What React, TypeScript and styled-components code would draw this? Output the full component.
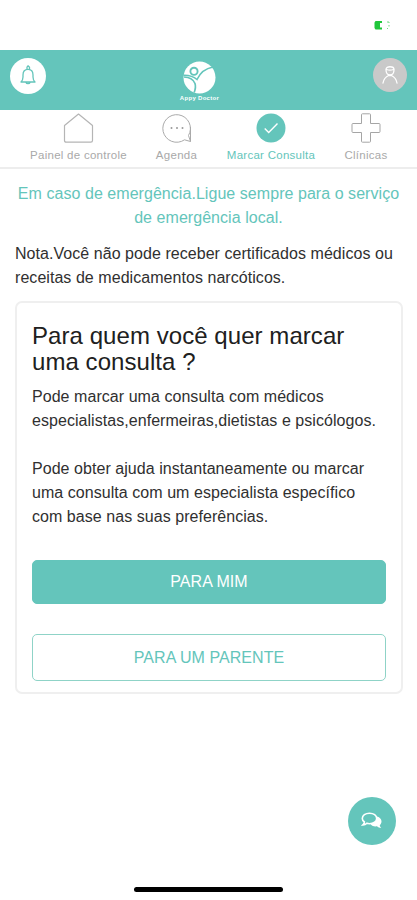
import React from 'react';
import styled, { createGlobalStyle } from 'styled-components';

const teal = '#64c5bb';

const GlobalStyle = createGlobalStyle`
  * { box-sizing: border-box; }
  body {
    margin: 0;
    background: #fff;
    font-family: "Liberation Sans", Arial, sans-serif;
    color: #303030;
  }
`;

const Screen = styled.div`
  width: 417px;
  height: 900px;
  display: flex;
  flex-direction: column;
  position: relative;
  overflow: hidden;
  background: #fff;
`;

const StatusBar = styled.div`
  height: 50px;
  flex: none;
  display: flex;
  justify-content: flex-end;
  padding: 21px 26px 0 0;
`;

const Header = styled.header`
  height: 60px;
  flex: none;
  display: grid;
  grid-template-columns: 36px 1fr 34px;
  align-items: start;
  padding: 8px 10px 0;
  background: ${teal};
`;

const RoundButton = styled.button<{ $size: number; $color: string }>`
  width: ${p => p.$size}px;
  height: ${p => p.$size}px;
  border: 0;
  padding: 0;
  border-radius: 50%;
  background: ${p => p.$color};
  display: flex;
  align-items: center;
  justify-content: center;
`;

const Brand = styled.div`
  display: flex;
  flex-direction: column;
  align-items: center;
  padding: 3px 20px 0 0;
  color: #fff;
  font-size: 6px;
  line-height: 8px;
  font-weight: 700;
  letter-spacing: 0.3px;
  svg { display: block; }
`;

const Nav = styled.nav`
  height: 59px;
  flex: none;
  display: grid;
  grid-template-columns: 127px 69px 120px 70px;
  padding: 3px 0 0 15px;
  border-bottom: 2px solid #ededed;
`;

const NavItem = styled.a<{ $active?: boolean }>`
  display: flex;
  flex-direction: column;
  align-items: center;
  font-size: 11.5px;
  line-height: 14px;
  white-space: nowrap;
  letter-spacing: 0.27px;
  color: ${p => (p.$active ? teal : '#a9a9a9')};
  svg { display: block; margin-bottom: 5px; }
`;

const Content = styled.main`
  padding: 13px 15px 0;
`;

const Line = styled.span`
  display: block;
  white-space: nowrap;
`;

const Paragraph = styled.p<{ $gap?: number }>`
  margin: 0 0 ${p => p.$gap ?? 0}px;
  font-size: 16px;
  line-height: 24px;
  letter-spacing: 0.05px;
`;

const Warning = styled(Paragraph)`
  color: ${teal};
  text-align: center;
`;

const Card = styled.section`
  width: 388px;
  height: 393px;
  margin-top: 11px;
  padding: 20px 15px 0;
  border: 2px solid #efefef;
  border-radius: 7px;
`;

const Title = styled.h1`
  margin: 0 0 10px;
  font-size: 24px;
  line-height: 26px;
  font-weight: 400;
  letter-spacing: 0.06px;
  color: #202020;
`;

const ActionButton = styled.button<{ $filled?: boolean; $height: number }>`
  display: block;
  width: 354px;
  height: ${p => p.$height}px;
  padding: 0;
  font: 16px "Liberation Sans", Arial, sans-serif;
  letter-spacing: 0.05px;
  border-radius: 5px;
  border: 1px solid ${p => (p.$filled ? teal : '#8fd3c7')};
  background: ${p => (p.$filled ? teal : '#fff')};
  color: ${p => (p.$filled ? '#fff' : teal)};
`;

const Actions = styled.div`
  display: flex;
  flex-direction: column;
  gap: 30px;
`;

const ChatButton = styled(RoundButton)`
  position: absolute;
  left: 348px;
  top: 797px;
`;

const HomeIndicator = styled.div`
  position: absolute;
  left: 134px;
  top: 887px;
  width: 149px;
  height: 5px;
  border-radius: 3px;
  background: #000;
`;

const BatteryIcon = () => (
  <svg width="17" height="9" viewBox="0 0 17 9">
    <path d="M1.500 0H8V2H6V6.500H8V8.500H1.500L.5 7V1.500Z" fill="#20c63b" />
    <path d="M13 1h2v1M15 4v1.500M13 7.500h1" stroke="#75dc85" fill="none" />
  </svg>
);

const BellIcon = () => (
  <svg width="18" height="22" viewBox="0 0 18 22" fill="none" stroke={teal} strokeWidth="1.3" strokeLinecap="round" strokeLinejoin="round">
    <path d="M8 4.300V2.200L9 .8L10.500 2.200V4.500" />
    <path d="M4 12V10C4 6.500 5.800 4.300 9 4.300s5 2.200 5 5.700v2c0 2.500.8 3.800 2 5H2c1.200-1.200 2-2.500 2-5ZM7 17.500c.4 1.500 3.600 1.500 4 0" />
  </svg>
);

const LogoIcon = () => (
  <svg width="33" height="33" viewBox="0 0 33 33" fill="none">
    <circle cx="16.500" cy="16.500" r="16" fill="#fff" />
    <circle cx="11" cy="10.300" r="3.600" stroke={teal} strokeWidth="1.900" />
    <path d="M.5 14.200C6 14 10 15 14 18.500C17 12 22 7.500 30 6" stroke={teal} strokeWidth="1.600" />
    <path d="M1 16c6 .3 9.500 2.500 11 6.500c1 3 .3 6-.8 9" stroke={teal} strokeWidth="1.700" />
  </svg>
);

const UserIcon = () => (
  <svg width="18" height="20" viewBox="0 0 18 20" fill="none" stroke="#fff" strokeWidth="1.3" strokeLinecap="round">
    <path d="M5 4.500C5 .8 13 .8 13 4.500S11.500 10 9 10S5 8.200 5 4.500Z" />
    <path d="M5.500 4.500c2 .8 5 .8 7 0M2 18c.6-3.500 2.500-6 5.500-7.500h3C13.500 12 15.400 14.500 16 18" />
  </svg>
);

const HomeIcon = () => (
  <svg width="31" height="30" viewBox="0 0 31 30" fill="none" stroke="#b5b5b5" strokeWidth="1.2" strokeLinejoin="round">
    <path d="M1.500 12.500L15.500 1L29.500 12.500V27.500Q29.500 29.200 27.800 29.200H3.200Q1.500 29.200 1.500 27.500Z" />
  </svg>
);

const AgendaIcon = () => (
  <svg width="30" height="30" viewBox="0 0 30 30" fill="none" stroke="#aaa" strokeWidth="1">
    <path d="M28.500 28.500L22.500 26.800A13.800 13.800 0 1 1 26.500 22.500L28.500 28.500ZM28.500 28.500V14" />
    <g fill="#999" stroke="none">
      <circle cx="9.500" cy="15" r="1" /><circle cx="15" cy="15" r="1" /><circle cx="20.500" cy="15" r="1" />
    </g>
  </svg>
);

const CheckIcon = () => (
  <svg width="30" height="30" viewBox="0 0 30 30" fill="none">
    <circle cx="15" cy="15" r="14.500" fill={teal} />
    <path d="M8.700 15.500l4 4L21.500 10.500" stroke="#fff" strokeWidth="1.4" />
  </svg>
);

const ClinicIcon = () => (
  <svg width="30" height="30" viewBox="0 0 30 30" fill="none" stroke="#a5a5a5" strokeWidth="1">
    <path d="M10.500 1.500Q10.500 .8 11.500 .8H18.500Q19.500 .8 19.500 1.500V10.500H28Q29 10.500 29 11.500V18.500Q29 19.500 28 19.500H19.500V28.500Q19.500 29.200 18.500 29.200H11.500Q10.500 29.200 10.500 28.500V19.500H2Q1 19.500 1 18.500V11.500Q1 10.500 2 10.500H10.500Z" />
  </svg>
);

const ChatIcon = () => (
  <svg width="22" height="18" viewBox="0 0 22 18">
    <path d="M14.500 4.500c3.500 0 6 2.100 6 5c0 1.500-.7 2.900-1.800 3.700c.2 1.200.8 2 1.500 2.700c-1.700 0-3-.6-4.200-1.600c-3 .4-6-.6-6.700-2.800" fill="#fff" />
    <path d="M8.500 1.200c4.100 0 7.200 2.200 7.200 5.200s-3.100 5.300-7.200 5.300c-.9 0-1.800-.1-2.600-.4c-1 1-2.300 1.600-4 1.600c.9-.8 1.500-1.700 1.500-2.900C2 9 1.300 7.800 1.300 6.400c0-3 3.100-5.200 7.200-5.200Z" fill={teal} stroke="#fff" strokeWidth="1.6" />
  </svg>
);

export default function App() {
  return (
    <Screen>
      <GlobalStyle />
      <StatusBar><BatteryIcon /></StatusBar>
      <Header>
        <RoundButton $size={36} $color="#fff"><BellIcon /></RoundButton>
        <Brand><LogoIcon />Appy Doctor</Brand>
        <RoundButton $size={34} $color="#c9c9c9"><UserIcon /></RoundButton>
      </Header>
      <Nav>
        <NavItem><HomeIcon />Painel de controle</NavItem>
        <NavItem><AgendaIcon />Agenda</NavItem>
        <NavItem $active><CheckIcon />Marcar Consulta</NavItem>
        <NavItem><ClinicIcon />Clínicas</NavItem>
      </Nav>
      <Content>
        <Warning $gap={12}>
          <Line>Em caso de emergência.Ligue sempre para o serviço</Line>
          <Line>de emergência local.</Line>
        </Warning>
        <Paragraph>
          <Line>Nota.Você não pode receber certificados médicos ou</Line>
          <Line>receitas de medicamentos narcóticos.</Line>
        </Paragraph>
        <Card>
          <Title>
            <Line>Para quem você quer marcar</Line>
            <Line>uma consulta ?</Line>
          </Title>
          <Paragraph $gap={24}>
            <Line>Pode marcar uma consulta com médicos</Line>
            <Line>especialistas,enfermeiras,dietistas e psicólogos.</Line>
          </Paragraph>
          <Paragraph $gap={31}>
            <Line>Pode obter ajuda instantaneamente ou marcar</Line>
            <Line>uma consulta com um especialista específico</Line>
            <Line>com base nas suas preferências.</Line>
          </Paragraph>
          <Actions>
            <ActionButton $filled $height={44}>PARA MIM</ActionButton>
            <ActionButton $height={47}>PARA UM PARENTE</ActionButton>
          </Actions>
        </Card>
      </Content>
      <ChatButton $size={48} $color={teal}><ChatIcon /></ChatButton>
      <HomeIndicator />
    </Screen>
  );
}
